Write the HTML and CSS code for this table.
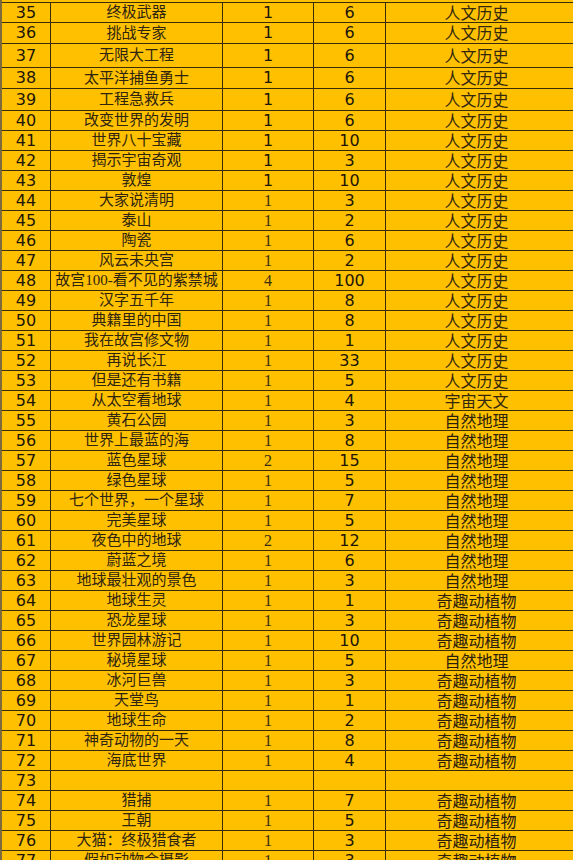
FILE: index.html
```html
<!DOCTYPE html>
<html lang="zh">
<head>
<meta charset="utf-8">
<title>列表</title>
<link rel="stylesheet" href="styles.css">
</head>
<body>
<div class="sheet">
  <div class="row first h21"><div class="c n">35</div><div class="c nm">终极武器</div><div class="c a">1</div><div class="c b">6</div><div class="c cat s">人文历史</div></div>
  <div class="row h21"><div class="c n">36</div><div class="c nm">挑战专家</div><div class="c a">1</div><div class="c b">6</div><div class="c cat s">人文历史</div></div>
  <div class="row h24"><div class="c n">37</div><div class="c nm">无限大工程</div><div class="c a">1</div><div class="c b">6</div><div class="c cat s">人文历史</div></div>
  <div class="row h21"><div class="c n">38</div><div class="c nm">太平洋捕鱼勇士</div><div class="c a">1</div><div class="c b">6</div><div class="c cat s">人文历史</div></div>
  <div class="row h22"><div class="c n">39</div><div class="c nm">工程急救兵</div><div class="c a">1</div><div class="c b">6</div><div class="c cat s">人文历史</div></div>
  <div class="row"><div class="c n">40</div><div class="c nm">改变世界的发明</div><div class="c a">1</div><div class="c b">6</div><div class="c cat s">人文历史</div></div>
  <div class="row"><div class="c n">41</div><div class="c nm">世界八十宝藏</div><div class="c a">1</div><div class="c b">10</div><div class="c cat s">人文历史</div></div>
  <div class="row"><div class="c n">42</div><div class="c nm">揭示宇宙奇观</div><div class="c a">1</div><div class="c b">3</div><div class="c cat s">人文历史</div></div>
  <div class="row"><div class="c n">43</div><div class="c nm">敦煌</div><div class="c a">1</div><div class="c b">10</div><div class="c cat s">人文历史</div></div>
  <div class="row"><div class="c n">44</div><div class="c nm">大家说清明</div><div class="c a sf">1</div><div class="c b">3</div><div class="c cat s">人文历史</div></div>
  <div class="row"><div class="c n">45</div><div class="c nm">泰山</div><div class="c a sf">1</div><div class="c b">2</div><div class="c cat s">人文历史</div></div>
  <div class="row"><div class="c n">46</div><div class="c nm">陶瓷</div><div class="c a sf">1</div><div class="c b">6</div><div class="c cat s">人文历史</div></div>
  <div class="row"><div class="c n">47</div><div class="c nm">风云未央宫</div><div class="c a sf">1</div><div class="c b">2</div><div class="c cat s">人文历史</div></div>
  <div class="row"><div class="c n">48</div><div class="c nm">故宫100-看不见的紫禁城</div><div class="c a sf">4</div><div class="c b">100</div><div class="c cat s">人文历史</div></div>
  <div class="row"><div class="c n">49</div><div class="c nm">汉字五千年</div><div class="c a sf">1</div><div class="c b">8</div><div class="c cat s">人文历史</div></div>
  <div class="row"><div class="c n">50</div><div class="c nm">典籍里的中国</div><div class="c a sf">1</div><div class="c b">8</div><div class="c cat s">人文历史</div></div>
  <div class="row"><div class="c n">51</div><div class="c nm">我在故宫修文物</div><div class="c a sf">1</div><div class="c b">1</div><div class="c cat s">人文历史</div></div>
  <div class="row"><div class="c n">52</div><div class="c nm">再说长江</div><div class="c a sf">1</div><div class="c b">33</div><div class="c cat s">人文历史</div></div>
  <div class="row"><div class="c n">53</div><div class="c nm">但是还有书籍</div><div class="c a sf">1</div><div class="c b">5</div><div class="c cat s">人文历史</div></div>
  <div class="row"><div class="c n">54</div><div class="c nm">从太空看地球</div><div class="c a sf">1</div><div class="c b">4</div><div class="c cat s">宇宙天文</div></div>
  <div class="row"><div class="c n">55</div><div class="c nm">黄石公园</div><div class="c a sf">1</div><div class="c b">3</div><div class="c cat">自然地理</div></div>
  <div class="row"><div class="c n">56</div><div class="c nm">世界上最蓝的海</div><div class="c a sf">1</div><div class="c b">8</div><div class="c cat">自然地理</div></div>
  <div class="row"><div class="c n">57</div><div class="c nm">蓝色星球</div><div class="c a sf">2</div><div class="c b">15</div><div class="c cat">自然地理</div></div>
  <div class="row"><div class="c n">58</div><div class="c nm">绿色星球</div><div class="c a sf">1</div><div class="c b">5</div><div class="c cat">自然地理</div></div>
  <div class="row"><div class="c n">59</div><div class="c nm">七个世界，一个星球</div><div class="c a sf">1</div><div class="c b">7</div><div class="c cat">自然地理</div></div>
  <div class="row"><div class="c n">60</div><div class="c nm">完美星球</div><div class="c a sf">1</div><div class="c b">5</div><div class="c cat">自然地理</div></div>
  <div class="row"><div class="c n">61</div><div class="c nm">夜色中的地球</div><div class="c a sf">2</div><div class="c b">12</div><div class="c cat">自然地理</div></div>
  <div class="row"><div class="c n">62</div><div class="c nm">蔚蓝之境</div><div class="c a sf">1</div><div class="c b">6</div><div class="c cat">自然地理</div></div>
  <div class="row"><div class="c n">63</div><div class="c nm">地球最壮观的景色</div><div class="c a sf">1</div><div class="c b">3</div><div class="c cat">自然地理</div></div>
  <div class="row"><div class="c n">64</div><div class="c nm">地球生灵</div><div class="c a sf">1</div><div class="c b">1</div><div class="c cat">奇趣动植物</div></div>
  <div class="row"><div class="c n">65</div><div class="c nm">恐龙星球</div><div class="c a sf">1</div><div class="c b">3</div><div class="c cat">奇趣动植物</div></div>
  <div class="row"><div class="c n">66</div><div class="c nm">世界园林游记</div><div class="c a sf">1</div><div class="c b">10</div><div class="c cat">奇趣动植物</div></div>
  <div class="row"><div class="c n">67</div><div class="c nm">秘境星球</div><div class="c a sf">1</div><div class="c b">5</div><div class="c cat">自然地理</div></div>
  <div class="row"><div class="c n">68</div><div class="c nm">冰河巨兽</div><div class="c a sf">1</div><div class="c b">3</div><div class="c cat">奇趣动植物</div></div>
  <div class="row"><div class="c n">69</div><div class="c nm">天堂鸟</div><div class="c a sf">1</div><div class="c b">1</div><div class="c cat">奇趣动植物</div></div>
  <div class="row"><div class="c n">70</div><div class="c nm">地球生命</div><div class="c a sf">1</div><div class="c b">2</div><div class="c cat">奇趣动植物</div></div>
  <div class="row"><div class="c n">71</div><div class="c nm">神奇动物的一天</div><div class="c a sf">1</div><div class="c b">8</div><div class="c cat">奇趣动植物</div></div>
  <div class="row"><div class="c n">72</div><div class="c nm">海底世界</div><div class="c a sf">1</div><div class="c b">4</div><div class="c cat">奇趣动植物</div></div>
  <div class="row"><div class="c n">73</div><div class="c nm"></div><div class="c a sf"></div><div class="c b"></div><div class="c cat"></div></div>
  <div class="row"><div class="c n">74</div><div class="c nm">猎捕</div><div class="c a sf">1</div><div class="c b">7</div><div class="c cat">奇趣动植物</div></div>
  <div class="row"><div class="c n">75</div><div class="c nm">王朝</div><div class="c a sf">1</div><div class="c b">5</div><div class="c cat">奇趣动植物</div></div>
  <div class="row"><div class="c n">76</div><div class="c nm">大猫：终极猎食者</div><div class="c a sf">1</div><div class="c b">3</div><div class="c cat">奇趣动植物</div></div>
  <div class="row"><div class="c n">77</div><div class="c nm">假如动物会摄影</div><div class="c a sf">1</div><div class="c b">3</div><div class="c cat">奇趣动植物</div></div>
</div>
</body>
</html>
```
FILE: styles.css
```css
html, body {
  margin: 0;
  padding: 0;
  background: #ffc000;
}
body {
  overflow: hidden;
  height: 860px;
}
.sheet {
  display: flex;
  flex-direction: column;
  padding-top: 2px;
  border-left: 2px solid #7d6a3a;
  background: #ffc000;
}
.row {
  display: grid;
  grid-template-columns: 48px 172px 91px 72px 1fr;
  height: 20px;
  flex: 0 0 auto;
  box-sizing: border-box;
  border-bottom: 1px solid #3a2c06;
}
.row.first { border-top: 1px solid #3a2c06; }
.row.h21 { height: 21px; }
.row.h22 { height: 22px; }
.row.h24 { height: 24px; }
.c {
  display: flex;
  align-items: center;
  justify-content: center;
  white-space: nowrap;
  color: #1c1608;
  line-height: 1;
}
.c + .c { border-left: 1px solid #3a2c06; }
.n, .a, .b {
  font-family: "DejaVu Sans", "Liberation Sans", sans-serif;
  font-size: 16px;
}
.a.sf {
  font-family: "Liberation Serif", "DejaVu Serif", serif;
  font-size: 16px;
  color: #3a2e10;
}
.nm {
  font-family: "Liberation Serif", "Noto Sans CJK SC", serif;
  font-size: 15px;
  color: #2e2410;
}
.cat {
  font-family: "Noto Sans CJK SC", sans-serif;
  font-size: 16px;
  padding-right: 6px;
  padding-bottom: 2px;
  color: #2a200c;
}
.cat.s { color: #33280e; }
```
